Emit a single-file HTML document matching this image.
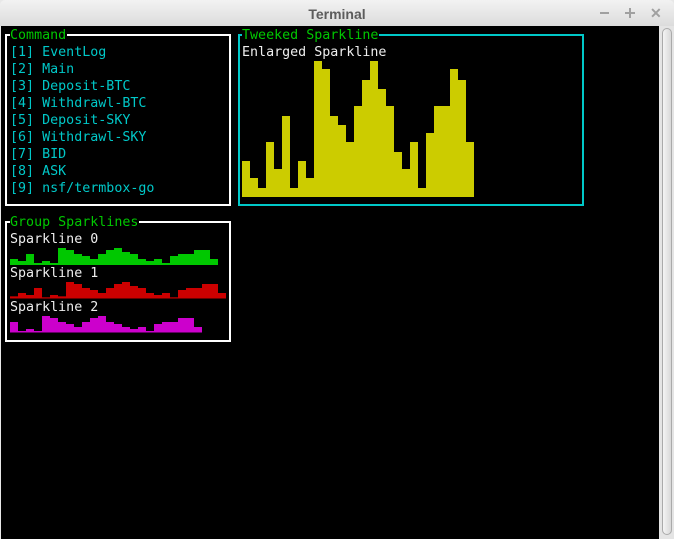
<!DOCTYPE html>
<html><head><style>
body{margin:0;width:674px;height:539px;overflow:hidden;background:#e8e8e8;position:relative;font-family:"DejaVu Sans Mono","Liberation Mono",monospace;}
#title{position:absolute;left:0;top:0;width:674px;height:26px;background:linear-gradient(#f2f2f2,#dcdcdc);border-radius:5px 5px 0 0;}
#title .t{position:absolute;left:0;width:674px;text-align:center;top:6px;font:bold 14px "Liberation Sans",sans-serif;color:#5c5c5c;}
#term{position:absolute;left:1px;top:26px;width:658px;height:513px;background:#000;}
#sb{position:absolute;left:659px;top:26px;width:15px;height:513px;background:#e4e4e4;}
#thumb{position:absolute;left:662px;top:28px;width:8px;height:505px;border:1px solid #aaa;border-radius:5px;background:linear-gradient(90deg,#f4f4f4,#d8d8d8);}
.box{position:absolute;border:2px solid #fff;}
.l{position:absolute;font-size:13.33px;line-height:17px;white-space:pre;}
.c{color:#00c8c8}.g{color:#00c800}.w{color:#eee}
.ttl{background:#000;padding:0 1px 0 0;}
</style></head><body>
<div id="title"><div class="t">Terminal</div>
<div style="position:absolute;left:600px;top:12px;width:9px;height:2px;background:#a0a0a0"></div>
<div style="position:absolute;left:625px;top:12px;width:10px;height:2px;background:#a0a0a0"></div>
<div style="position:absolute;left:629px;top:8px;width:2px;height:10px;background:#a0a0a0"></div>
<div style="position:absolute;left:650px;top:5px;font:bold 14px 'Liberation Sans',sans-serif;color:#a0a0a0">✕</div>
</div>
<div id="term"></div>
<div id="sb"></div><div id="thumb"></div>

<div class="box" style="left:5px;top:34px;width:222px;height:168px"></div>
<div class="box" style="left:238px;top:34px;width:342px;height:168px;border-color:#00c8c8"></div>
<div class="box" style="left:5px;top:221px;width:222px;height:117px"></div>

<div class="l g" style="left:10px;top:27px"><span class="ttl">Command</span></div>
<div class="l c" style="left:10px;top:44px">[1] EventLog
[2] Main
[3] Deposit-BTC
[4] Withdrawl-BTC
[5] Deposit-SKY
[6] Withdrawl-SKY
[7] BID
[8] ASK
[9] nsf/termbox-go</div>
<div class="l g" style="left:242px;top:27px"><span class="ttl">Tweeked Sparkline</span></div>
<div class="l w" style="left:242px;top:44px">Enlarged Sparkline</div>
<div class="l g" style="left:10px;top:214px"><span class="ttl">Group Sparklines</span></div>
<div class="l w" style="left:10px;top:231px">Sparkline 0</div>
<div class="l w" style="left:10px;top:265px">Sparkline 1</div>
<div class="l w" style="left:10px;top:299px">Sparkline 2</div>

<svg style="position:absolute;left:0;top:0" width="674" height="539" id="s"></svg>
<script>
var s=document.getElementById('s'),h='';
function bars(x0,bot,tops,col){tops.forEach(function(t,i){h+='<rect x="'+(x0+i*8)+'" y="'+t+'" width="8" height="'+(bot-t)+'" fill="'+col+'"/>';});}
bars(242,197,[161,178,188,142,169,116,188,161,178,61,69,116,125,142,106,80,61,89,106,152,169,142,188,133,106,106,69,80,142],'#cccc00');
bars(10,265,[259,261,254,263,261,263,248,250,254,256,259,254,250,248,252,254,259,261,259,263,256,254,254,250,250,259],'#00c800');
var r=[244,234,240,219,247,240,244,201,207,219,225,234,219,207,201,213,219,234,240,234,247,225,219,219,207,207,234].map(function(v){return 215+v/3});
bars(10,298.5,r,'#cc0000');
var m=[321,348,342,348,303,309,321,327,336,321,309,303,321,327,336,342,336,348,327,321,321,309,309,336].map(function(v){return 215+v/3});
bars(10,332.5,m,'#cc00cc');
s.innerHTML=h;
</script>
</body></html>
